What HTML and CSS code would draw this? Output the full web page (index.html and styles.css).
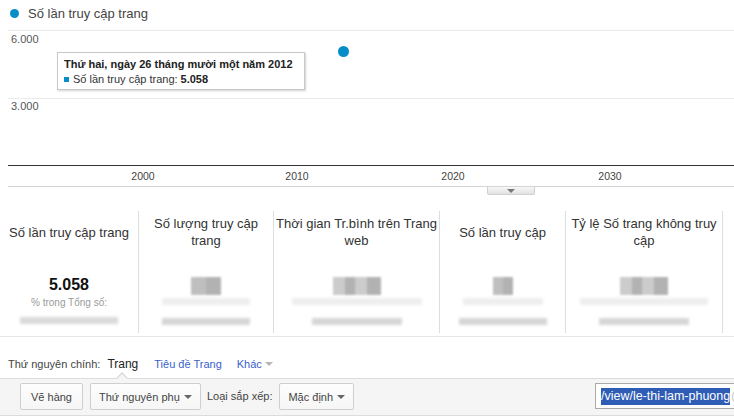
FILE: index.html
```html
<!DOCTYPE html>
<html lang="vi">
<head>
<meta charset="utf-8">
<title>Số lần truy cập trang</title>
<link rel="stylesheet" href="styles.css">
</head>
<body>
<div class="page">
  <div class="legend">
    <span class="legend-dot"></span>
    <span class="legend-text">Số lần truy cập trang</span>
  </div>

  <div class="chart">
    <svg class="chart-lines" width="734" height="160" viewBox="0 0 734 160">
      <line x1="8" y1="0.5" x2="734" y2="0.5" stroke="#ebebeb" stroke-width="1"/>
      <line x1="8" y1="68.5" x2="734" y2="68.5" stroke="#ebebeb" stroke-width="1"/>
      <line x1="8" y1="135.5" x2="734" y2="135.5" stroke="#333333" stroke-width="1"/>
      <line x1="8" y1="156.5" x2="734" y2="156.5" stroke="#d4d4d4" stroke-width="1"/>
    </svg>
    <span class="ylabel ylabel-top">6.000</span>
    <span class="ylabel ylabel-mid">3.000</span>
    <span class="xlabel x2000">2000</span>
    <span class="xlabel x2010">2010</span>
    <span class="xlabel x2020">2020</span>
    <span class="xlabel x2030">2030</span>
    <span class="point"></span>
    <div class="tooltip">
      <div class="tt-title">Thứ hai, ngày 26 tháng mười một năm 2012</div>
      <div class="tt-row"><span class="tt-sq"></span>Số lần truy cập trang: <b>5.058</b></div>
    </div>
  </div>
  <div class="chart-tab"><span class="tab-tri"></span></div>

  <div class="scorecards">
    <div class="card">
      <div class="card-head">Số lần truy cập trang</div>
      <div class="card-value">5.058</div>
      <div class="card-pct">% trong Tổng số:</div>
      <div class="blur-line bl-main"></div>
    </div>
    <div class="card">
      <div class="card-head">Số lượng truy cập trang</div>
      <div class="blur-block bb-s"></div>
      <div class="blur-line bl-1 w88"></div>
      <div class="blur-line bl-2 w88"></div>
    </div>
    <div class="card">
      <div class="card-head">Thời gian Tr.bình trên Trang web</div>
      <div class="blur-block bb-l"></div>
      <div class="blur-line bl-1 w130"></div>
      <div class="blur-line bl-2 w90"></div>
    </div>
    <div class="card">
      <div class="card-head">Số lần truy cập</div>
      <div class="blur-block bb-xs"></div>
      <div class="blur-line bl-1 w80"></div>
      <div class="blur-line bl-2 w88"></div>
    </div>
    <div class="card">
      <div class="card-head">Tỷ lệ Số trang không truy cập</div>
      <div class="blur-block bb-l"></div>
      <div class="blur-line bl-1 w128"></div>
      <div class="blur-line bl-2 w90"></div>
    </div>
    <div class="card card-edge"></div>
  </div>

  <div class="dims">
    <span class="dims-label">Thứ nguyên chính:</span>
    <span class="dims-current">Trang</span>
    <a class="dims-link">Tiêu đề Trang</a>
    <a class="dims-link dims-more">Khác<span class="more-tri"></span></a>
  </div>

  <div class="toolbar">
    <span class="notch"></span>
    <button class="btn btn-plot">Vẽ hàng</button>
    <button class="btn btn-drop btn-secondary">Thứ nguyên phụ<span class="btn-tri"></span></button>
    <span class="sort-label">Loại sắp xếp:</span>
    <button class="btn btn-drop btn-sort">Mặc định<span class="btn-tri"></span></button>
    <div class="search"><span class="sel">/view/le-thi-lam-phuong</span><span class="after">(</span></div>
  </div>
</div>
</body>
</html>
```

FILE: styles.css
```css
* { box-sizing: border-box; }
html, body { margin: 0; padding: 0; background: #fff; }
body { font-family: "Liberation Sans", Arial, sans-serif; color: #333; }
.page { width: 734px; height: 420px; overflow: hidden; position: relative; }

.legend { height: 30px; display: flex; align-items: center; padding-left: 10px; padding-bottom: 3px; }
.legend-dot { width: 9px; height: 9px; border-radius: 50%; background: #058dc7; margin-right: 9px; }
.legend-text { font-size: 13px; color: #444; }

.chart { position: relative; height: 157px; }
.chart-lines { position: absolute; left: 0; top: 0; }
.ylabel { position: absolute; left: 11px; font-size: 11px; color: #555; line-height: 13px; }
.ylabel-top { top: 3px; }
.ylabel-mid { top: 70px; }
.xlabel { position: absolute; top: 140px; font-size: 10.5px; color: #444; line-height: 13px; width: 40px; text-align: center; }
.x2000 { left: 123px; }
.x2010 { left: 277px; }
.x2020 { left: 433px; }
.x2030 { left: 590px; }
.point { position: absolute; left: 338px; top: 16px; width: 11px; height: 11px; border-radius: 50%; background: #058dc7; }

.tooltip { position: absolute; left: 57px; top: 22px; width: 248px; height: 38px; background: #fff; border: 1px solid #c8c8c8; box-shadow: 1px 1px 2px rgba(0,0,0,0.18); padding: 4px 0 0 6px; }
.tt-title { font-size: 11px; font-weight: bold; color: #222; line-height: 15px; white-space: nowrap; }
.tt-row { font-size: 11px; color: #333; line-height: 14px; display: flex; align-items: center; white-space: nowrap; }
.tt-row b { margin-left: 3px; color: #222; }
.tt-sq { width: 5px; height: 5px; background: #058dc7; margin-right: 4px; }

.chart-tab { margin-left: 487px; width: 48px; height: 8px; border: 1px solid #d0d0d0; border-top: none; border-radius: 0 0 2px 2px; background: linear-gradient(#f7f7f7, #e2e2e2); display: flex; justify-content: center; align-items: center; }
.tab-tri { width: 0; height: 0; border-left: 4px solid transparent; border-right: 4px solid transparent; border-top: 4px solid #777; }

.scorecards { margin-top: 16px; display: grid; grid-template-columns: 138px 135px 166px 126px 157px 12px; padding-bottom: 3px; border-bottom: 1px solid #e6e6e6; }
.card { height: 122px; border-left: 1px solid #dedede; display: flex; flex-direction: column; align-items: center; padding: 4px 0 0; }
.card:first-child { border-left: none; }
.card-head { height: 34px; display: flex; align-items: center; justify-content: center; text-align: center; font-size: 13px; line-height: 17px; color: #333; }
.card-value { margin-top: 26px; font-size: 16px; font-weight: bold; color: #111; line-height: 20px; }
.card-pct { font-size: 10px; color: #9a9a9a; line-height: 14px; margin-top: 1px; }

.blur-block { margin-top: 28px; height: 18px; background: linear-gradient(90deg, #aaa 0 50%, #999 50% 100%); filter: blur(1.2px); opacity: 0.75; }
.bb-xs { width: 20px; }
.bb-s { width: 30px; }
.bb-l { width: 48px; background: linear-gradient(90deg, #bbb 0 25%, #999 25% 45%, #bbb 45% 70%, #999 70% 100%); }
.blur-line { height: 7px; background: #ccc; filter: blur(1.5px); }
.bl-1 { margin-top: 3px; background: #eeeeee; }
.bl-2 { margin-top: 13px; background: #d6d6d6; }
.bl-main { width: 98px; margin-top: 7px; background: #dadada; }
.w80 { width: 80px; }
.w88 { width: 88px; }
.w90 { width: 90px; }
.w128 { width: 128px; }
.w130 { width: 130px; }

.dims { height: 41px; padding-top: 19px; padding-left: 8px; display: flex; align-items: flex-start; font-size: 11px; line-height: 16px; }
.dims-label { color: #444; margin-right: 7px; }
.dims-current { color: #222; font-size: 12px; margin-right: 16px; }
.dims-link { color: #3a5fcd; font-size: 11px; margin-right: 15px; display: flex; align-items: center; }
.more-tri { margin-left: 3px; width: 0; height: 0; border-left: 4px solid transparent; border-right: 4px solid transparent; border-top: 4px solid #b5b5b5; }

.toolbar { position: relative; height: 38px; border-top: 1px solid #dcdcdc; border-bottom: 1px solid #dcdcdc; background: #f5f5f5; display: flex; align-items: flex-start; padding: 4px 0 0 20px; }
.notch { position: absolute; left: 118px; top: -5px; width: 8px; height: 8px; background: #f5f5f5; border-left: 1px solid #d0d0d0; border-top: 1px solid #d0d0d0; transform: rotate(45deg); }
.btn { height: 27px; border: 1px solid #cfcfcf; border-radius: 2px; background: linear-gradient(#fdfdfd, #f6f6f6); font-family: "Liberation Sans", Arial, sans-serif; font-size: 11px; color: #444; padding: 0; display: flex; align-items: center; justify-content: center; white-space: nowrap; }
.btn-plot { width: 63px; margin-right: 7px; }
.btn-drop { justify-content: flex-start; padding-left: 8px; }
.btn-secondary { width: 111px; margin-right: 6px; }
.btn-sort { width: 75px; }
.btn-tri { margin-left: auto; margin-right: 8px; width: 0; height: 0; border-left: 4px solid transparent; border-right: 4px solid transparent; border-top: 4px solid #666; }
.sort-label { font-size: 11px; color: #444; line-height: 27px; margin-right: 7px; white-space: nowrap; }
.search { margin-left: auto; margin-right: -40px; flex-shrink: 0; width: 179px; height: 26px; border: 1px solid #a9a9a9; background: #fff; display: flex; align-items: center; padding-left: 5px; font-size: 12.5px; white-space: nowrap; overflow: hidden; }
.sel { background: #2f5cb4; color: #fff; line-height: 17px; }
.after { color: #c4c4c4; margin-left: 1px; font-size: 11px; }
```
